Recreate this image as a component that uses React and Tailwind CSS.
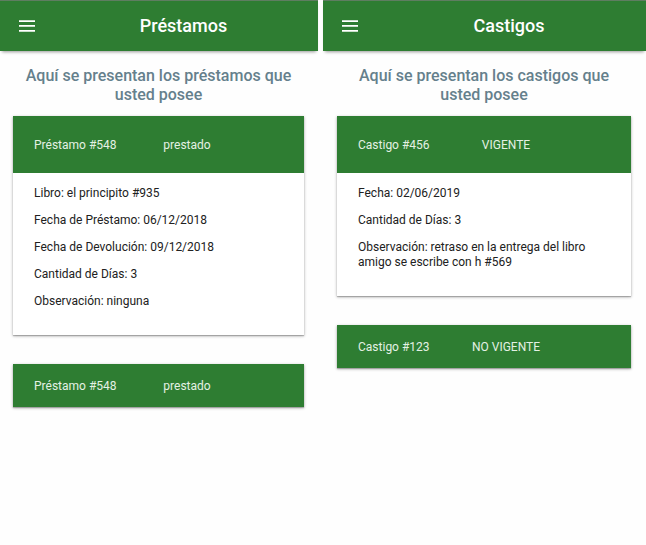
import { useState } from "react";

const loans = [
  {
    title: "Préstamo #548",
    status: "prestado",
    details: [
      "Libro: el principito #935",
      "Fecha de Préstamo: 06/12/2018",
      "Fecha de Devolución: 09/12/2018",
      "Cantidad de Días: 3",
      "Observación: ninguna",
    ],
  },
  {
    title: "Préstamo #548",
    status: "prestado",
    details: ["Observación: ninguna"],
  },
];

const penalties = [
  {
    title: "Castigo #456",
    status: "VIGENTE",
    details: [
      "Fecha: 02/06/2019",
      "Cantidad de Días: 3",
      "Observación: retraso en la entrega del libro amigo se escribe con h #569",
    ],
  },
  {
    title: "Castigo #123",
    status: "NO VIGENTE",
    details: ["Cantidad de Días: 3"],
  },
];

function MenuIcon() {
  return (
    <svg viewBox="0 0 16 12" className="h-3 w-4" fill="currentColor" aria-hidden="true">
      <path d="M0 0.2h16v1.7H0zM0 5.1h16v1.7H0zM0 10.1h16v1.7H0z" />
    </svg>
  );
}

function Panel({ item, columns, open, onToggle }) {
  return (
    <section className="bg-white shadow-[0_1px_3px_rgba(0,0,0,0.3),0_1px_1px_rgba(0,0,0,0.2)]">
      <button
        type="button"
        aria-expanded={open}
        onClick={onToggle}
        className={`grid w-full items-center bg-[#2e7d32] px-[21px] pt-px text-[12px] leading-[15px] text-[#e4f1e4] ${columns} ${
          open ? "h-[57px]" : "h-[43px]"
        }`}
      >
        <span className="text-left">{item.title}</span>
        <span className="text-center whitespace-nowrap">{item.status}</span>
      </button>
      {open && (
        <div className="flex flex-col gap-3 pt-[13px] pr-[30px] pb-[26px] pl-[21px] text-[12px] leading-[15px] text-[#212121]">
          {item.details.map((line) => (
            <p key={line}>{line}</p>
          ))}
        </div>
      )}
    </section>
  );
}

function Screen({ title, intro, items, columns, gutters }) {
  const [openIndex, setOpenIndex] = useState(0);
  return (
    <div className="min-w-0">
      <header className="grid h-[51px] grid-cols-[49px_1fr] items-center border-t border-[#5f7d61] bg-[#2e7d32] text-white shadow-[0_3px_3px_-2px_rgba(0,0,0,0.4)]">
        <button type="button" aria-label="Menú" className="flex h-full items-center pl-[19px]">
          <MenuIcon />
        </button>
        <h1 className="text-center text-[18px] leading-6 font-medium">{title}</h1>
      </header>
      <main className={gutters}>
        <h2 className="px-2 pt-[15px] pb-3 text-center text-[16px] leading-[19px] font-medium text-[#65808c]">
          {intro}
        </h2>
        <div className="flex flex-col gap-[29px]">
          {items.map((item, i) => (
            <Panel
              key={i}
              item={item}
              columns={columns}
              open={openIndex === i}
              onToggle={() => setOpenIndex(openIndex === i ? -1 : i)}
            />
          ))}
        </div>
      </main>
    </div>
  );
}

export default function App() {
  return (
    <div className="grid min-h-screen grid-cols-[318fr_323fr] gap-[5px] bg-[#fefefe] font-['Roboto',sans-serif]">
      <Screen
        title="Préstamos"
        intro="Aquí se presentan los préstamos que usted posee"
        items={loans}
        columns="grid-cols-[105px_96px_1fr]"
        gutters="pl-[13px] pr-[14px]"
      />
      <Screen
        title="Castigos"
        intro="Aquí se presentan los castigos que usted posee"
        items={penalties}
        columns="grid-cols-[100px_96px_1fr]"
        gutters="pl-[14px] pr-[15px]"
      />
    </div>
  );
}
